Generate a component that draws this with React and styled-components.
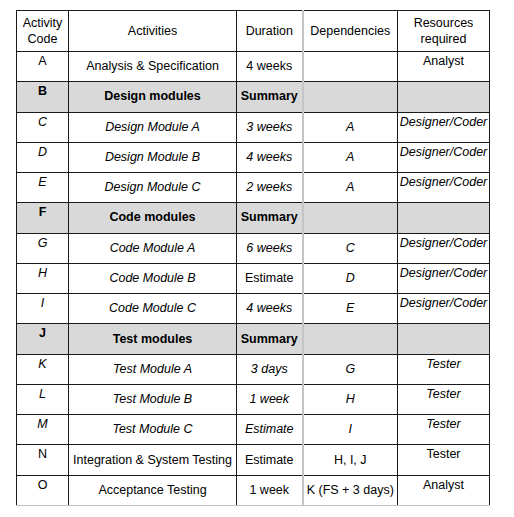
import React from "react";
import styled, { createGlobalStyle } from "styled-components";

const GlobalStyle = createGlobalStyle`
  body {
    margin: 0;
    background: #ffffff;
    font-family: "Liberation Sans", Arial, sans-serif;
    color: #000;
  }
`;

// rows of the activity plan
const rows = [
  { code: "A", name: "Analysis & Specification", duration: "4 weeks", deps: "", res: "Analyst" },
  { code: "B", name: "Design modules", duration: "Summary", summary: true },
  { code: "C", name: "Design Module A", duration: "3 weeks", deps: "A", res: "Designer/Coder", italic: true },
  { code: "D", name: "Design Module B", duration: "4 weeks", deps: "A", res: "Designer/Coder", italic: true },
  { code: "E", name: "Design Module C", duration: "2 weeks", deps: "A", res: "Designer/Coder", italic: true },
  { code: "F", name: "Code modules", duration: "Summary", summary: true },
  { code: "G", name: "Code Module A", duration: "6 weeks", deps: "C", res: "Designer/Coder", italic: true },
  { code: "H", name: "Code Module B", duration: "Estimate", deps: "D", res: "Designer/Coder", italic: true, plainDuration: true },
  { code: "I", name: "Code Module C", duration: "4 weeks", deps: "E", res: "Designer/Coder", italic: true },
  { code: "J", name: "Test modules", duration: "Summary", summary: true },
  { code: "K", name: "Test Module A", duration: "3 days", deps: "G", res: "Tester", italic: true },
  { code: "L", name: "Test Module B", duration: "1 week", deps: "H", res: "Tester", italic: true },
  { code: "M", name: "Test Module C", duration: "Estimate", deps: "I", res: "Tester", italic: true },
  { code: "N", name: "Integration & System Testing", duration: "Estimate", deps: "H, I, J", res: "Tester" },
  { code: "O", name: "Acceptance Testing", duration: "1 week", deps: "K (FS + 3 days)", res: "Analyst" },
];

const App = () => {
  return (
    <>
      <GlobalStyle />
      <Page>
        <Table>
          <colgroup>
            <col style={{ width: 52 }} />
            <col style={{ width: 168 }} />
            <col style={{ width: 66 }} />
            <col style={{ width: 95 }} />
            <col style={{ width: 92 }} />
          </colgroup>
          <thead>
            <HeadRow>
              <HeadCell>Activity<br />Code</HeadCell>
              <HeadCell>Activities</HeadCell>
              <HeadCell>Duration</HeadCell>
              <HeadCell $split>Dependencies</HeadCell>
              <HeadCell>Resources<br />required</HeadCell>
            </HeadRow>
          </thead>
          <tbody>
            {rows.map((r, i) => {
              const last = i === rows.length - 1;
              return (
                <Row key={r.code} $summary={r.summary}>
                  <Cell $top $bold={r.summary} $italic={r.italic} $last={last}>{r.code}</Cell>
                  <Cell $bold={r.summary} $italic={r.italic} $last={last}>{r.name}</Cell>
                  <Cell $bold={r.summary} $italic={r.italic && !r.plainDuration} $last={last}>{r.duration}</Cell>
                  <Cell $split $italic={r.italic} $last={last}>{r.deps}</Cell>
                  <Cell $top $tight $italic={r.italic} $last={last}>{r.res}</Cell>
                </Row>
              );
            })}
          </tbody>
        </Table>
      </Page>
    </>
  );
};

export default App;

const Page = styled.div`
  padding: 10px 0 0 16px;
`;

const Table = styled.table`
  border-collapse: collapse;
  table-layout: fixed;
  width: 473px;
  font-family: "Liberation Sans", Arial, sans-serif;
  font-size: 12.5px;
  line-height: 15px;
  color: #000;
`;

const HeadRow = styled.tr`
  height: 41px;
`;

const HeadCell = styled.th`
  font-weight: normal;
  text-align: center;
  vertical-align: middle;
  border: 1px solid #1a1a1a;
  border-left: ${(p) => (p.$split ? "2px solid #c4c4c4" : "1px solid #1a1a1a")};
  padding: 0 2px;
  line-height: 16.5px;
`;

const Row = styled.tr`
  height: 30.27px;
  background: ${(p) => (p.$summary ? "#d9d9d9" : "#ffffff")};
`;

const Cell = styled.td`
  text-align: center;
  vertical-align: ${(p) => (p.$top ? "top" : "middle")};
  padding: ${(p) => (p.$top ? "2px" : "0")} ${(p) => (p.$tight ? "0" : "2px")} 0;
  white-space: nowrap;
  overflow: visible;
  font-weight: ${(p) => (p.$bold ? "bold" : "normal")};
  font-style: ${(p) => (p.$italic ? "italic" : "normal")};
  border: 1px solid #1a1a1a;
  border-left: ${(p) => (p.$split ? "2px solid #c4c4c4" : "1px solid #1a1a1a")};
  border-bottom: ${(p) => (p.$last ? "1px solid #c4c4c4" : "1px solid #1a1a1a")};
`;
